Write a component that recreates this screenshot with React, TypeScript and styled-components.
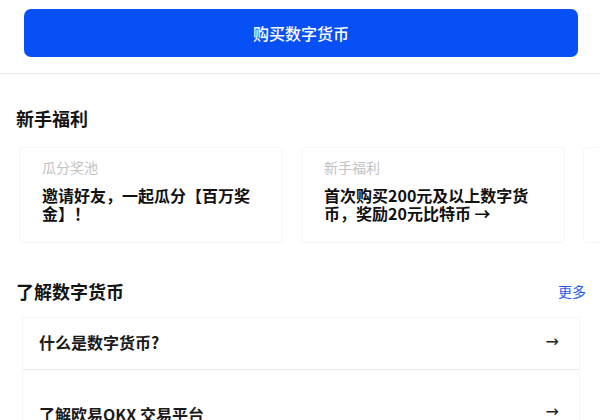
import React from 'react';
import styled, { createGlobalStyle } from 'styled-components';

const GlobalStyle = createGlobalStyle`
  body {
    margin: 0;
    background: #ffffff;
    font-family: "Noto Sans CJK SC", "Noto Sans", sans-serif;
    color: #121212;
  }
`;

const Page = styled.div`
  width: 600px;
  height: 420px;
  overflow: hidden;
  background: #ffffff;
`;

const BuyBar = styled.div`
  padding: 9px 22px 16px 24px;
  border-bottom: 1px solid #ececec;
`;

const BuyButton = styled.button`
  display: flex;
  align-items: center;
  justify-content: center;
  width: 100%;
  height: 48px;
  border: none;
  border-radius: 7px;
  background: #0750f6;
  color: #ffffff;
  font-family: inherit;
  font-size: 16px;
  font-weight: 500;
`;

const Section = styled.section`
  padding: 0 0 0 16px;
`;

const SectionHead = styled.div<{ $top: number }>`
  display: flex;
  align-items: center;
  justify-content: space-between;
  padding-right: 14px;
  height: 28px;
  margin-top: ${(p) => p.$top}px;
`;

const SectionTitle = styled.h2`
  margin: 0;
  font-size: 18px;
  font-weight: 600;
  color: #141414;
`;

const MoreLink = styled.a`
  font-size: 14px;
  color: #1f5af6;
`;

const CardRow = styled.div`
  display: flex;
  gap: 18px;
  margin-top: 15px;
  padding-left: 3px;
`;

const PromoCard = styled.div`
  flex: 0 0 264px;
  height: 96px;
  box-sizing: border-box;
  padding: 9px 22px 0;
  border: 1px solid #f5f5f5;
  border-radius: 4px;
`;

const CardLabel = styled.div`
  font-size: 14px;
  line-height: 20px;
  color: #c2c2c2;
`;

const CardTitle = styled.div`
  margin-top: 9px;
  font-size: 16px;
  font-weight: 700;
  line-height: 18px;
  color: #111111;
`;

const LearnList = styled.div`
  margin: 12px 20px 0 6px;
`;

const LearnRow = styled.div`
  display: flex;
  align-items: center;
  justify-content: space-between;
  height: 53px;
  box-sizing: border-box;
  padding: 0 20px 4px 16px;
  border: 1px solid #f6f6f6;
  border-bottom: 1px solid #ebebeb;
  & + & {
    border-top: none;
    height: 90px;
    align-items: flex-start;
    padding-top: 32px;
  }
`;

const RowText = styled.span`
  font-size: 16px;
  font-weight: 600;
  color: #1a1a1a;
`;

const Arrow = styled.span`
  font-size: 16px;
  color: #222;
  font-family: "DejaVu Sans", sans-serif;
`;

const promos = [
  { id: 'pool', label: '瓜分奖池', title: '邀请好友，一起瓜分【百万奖金】！' },
  { id: 'new', label: '新手福利', title: '首次购买200元及以上数字货币，奖励20元比特币 →' },
  { id: 'next', label: '', title: '' },
];

const lessons = ['什么是数字货币?', '了解欧易OKX 交易平台'];

const App = () => {
  return (
    <Page>
      <GlobalStyle />
      <BuyBar>
        <BuyButton>购买数字货币</BuyButton>
      </BuyBar>
      <Section>
        <SectionHead $top={30}>
          <SectionTitle>新手福利</SectionTitle>
        </SectionHead>
        <CardRow>
          {promos.map((p) => (
            <PromoCard key={p.id}>
              <CardLabel>{p.label}</CardLabel>
              <CardTitle>{p.title}</CardTitle>
            </PromoCard>
          ))}
        </CardRow>
        <SectionHead $top={34}>
          <SectionTitle>了解数字货币</SectionTitle>
          <MoreLink>更多</MoreLink>
        </SectionHead>
        <LearnList>
          {lessons.map((t) => (
            <LearnRow key={t}>
              <RowText>{t}</RowText>
              <Arrow>→</Arrow>
            </LearnRow>
          ))}
        </LearnList>
      </Section>
    </Page>
  );
};

export default App;
